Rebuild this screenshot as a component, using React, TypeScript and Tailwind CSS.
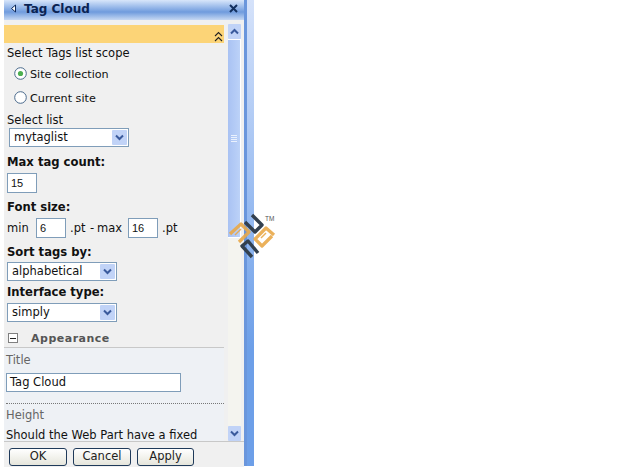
import React from "react";

function Chevron({ dir = "down" }: { dir?: "up" | "down" }) {
  return (
    <svg width="9" height="7" viewBox="0 0 9 7">
      <path d={dir === "down" ? "M1 1.5 L4.5 5 L8 1.5" : "M1 5.5 L4.5 2 L8 5.5"} fill="none" stroke="#3a5a9c" strokeWidth="2" />
    </svg>
  );
}

function Select({ value, width, ml = "" }: { value: string; width: string; ml?: string }) {
  return (
    <div className={`flex h-[19px] items-center justify-between border border-[#7f9db9] bg-white pl-[4px] pr-[1px] ${width} ${ml}`}>
      <span className="text-[11.5px] leading-none text-[#111]">{value}</span>
      <div className="flex h-[15px] w-[15px] items-center justify-center rounded-[1px] bg-[#c1d3f7]">
        <Chevron />
      </div>
    </div>
  );
}

function Input({ value, width }: { value: string; width: string }) {
  return (
    <div className={`flex h-[20px] items-center border border-[#7f9db9] bg-white pl-[3px] ${width} text-[11px] leading-none text-[#111] font-['Liberation_Sans',sans-serif]`}>
      {value}
    </div>
  );
}

function Radio({ checked, label }: { checked?: boolean; label: string }) {
  return (
    <div className="flex h-[24px] items-center pl-[7px]">
      <svg width="13" height="13" viewBox="0 0 13 13">
        <circle cx="6.5" cy="6.5" r="5.8" fill="#fff" stroke="#4a6a8c" />
        {checked && <circle cx="6.5" cy="6.5" r="2.6" fill="#4caf50" />}
      </svg>
      <span className="ml-[3px] pt-[3px] text-[11.2px] leading-[15px] text-[#111]">{label}</span>
    </div>
  );
}

function Heading({ children, className = "" }: { children: React.ReactNode; className?: string }) {
  return <div className={`text-[11.6px] font-bold leading-[14px] text-[#111] ${className}`}>{children}</div>;
}

function Btn({ label, width }: { label: string; width: string }) {
  return (
    <div className={`flex h-[18px] items-center justify-center rounded-[3px] border-[1.5px] border-[#1f3a5a] bg-gradient-to-b from-white to-[#e6e6dc] text-[11.5px] leading-none text-[#222] ${width}`}>
      {label}
    </div>
  );
}

function Logo() {
  return (
    <svg className="absolute left-[228px] top-[210px]" width="50" height="50" viewBox="0 0 50 50">
      <g fill="none" strokeLinejoin="round">
        <g stroke="#e9a94a" strokeWidth="3.2" opacity="0.9">
          <path d="M2 24 L13 14 L21 22 L11 32" />
          <path d="M7 25 L13 19" strokeWidth="1.5" />
          <path d="M46 25 L38 18 L27 29 L34 36 L44 26" />
          <path d="M33 28 L38 23" strokeWidth="1.5" />
        </g>
        <g stroke="#33404f" strokeWidth="3.4">
          <path d="M24 5 L34 15 L27 22 L17 12" />
          <path d="M30 43 L20 31 L14 36 L24 47" />
        </g>
      </g>
      <text x="37" y="11" fontSize="6.5" fill="#555" fontFamily="'Liberation Sans', sans-serif">TM</text>
    </svg>
  );
}

export default function App() {
  return (
    <div className="relative h-[471px] w-[640px] overflow-hidden bg-white font-['DejaVu_Sans',Verdana,sans-serif]">
      <div className="flex h-[467px] w-[254px]">
        <div className="flex w-[244px] flex-col pl-[4px]">
          <div className="flex h-[20px] items-center bg-gradient-to-b from-[#d8e6fa] via-[#6f9bdd] via-60% to-[#c6d8f2] pb-[3px] pl-[6px] pr-[6px]">
            <svg width="7" height="9" viewBox="0 0 7 9" className="shrink-0">
              <path d="M5.5 1 L1.5 4.5 L5.5 8 Z" fill="#fff" stroke="#0d2a5c" />
            </svg>
            <span className="ml-[7px] text-[12px] font-bold text-[#0a2353]">Tag Cloud</span>
            <svg width="9" height="9" viewBox="0 0 9 9" className="ml-auto">
              <path d="M1 1 L8 8 M8 1 L1 8" stroke="#12305f" strokeWidth="2" />
            </svg>
          </div>
          <div className="flex min-h-0 flex-1 flex-col bg-[#f0f0f0]">
            <div className="flex min-h-0 flex-1 pt-[4px]">
              <div className="min-w-0 flex-1 overflow-hidden">
                <div className="mt-[1px] flex h-[18px] items-end justify-end bg-[#fcd477] pb-[1px] pr-[1px]">
                  <svg width="9" height="11" viewBox="0 0 9 11">
                    <path d="M1 5 L4.5 1.5 L8 5 M1 10 L4.5 6.5 L8 10" fill="none" stroke="#222" strokeWidth="1.1" />
                  </svg>
                </div>
                <div className="pl-[3px]">
                  <div className="mt-[3px] text-[11.5px] leading-[15px] text-[#111]">Select Tags list scope</div>
                  <Radio checked label="Site collection" />
                  <Radio label="Current site" />
                  <div className="mt-[4px] text-[11.5px] leading-[15px] text-[#111]">Select list</div>
                  <Select value="mytaglist" width="w-[120px]" ml="ml-[2px]" />
                  <Heading className="mt-[8px]">Max tag count:</Heading>
                  <div className="mt-[4px]"><Input value="15" width="w-[30px]" /></div>
                  <Heading className="mt-[7px]">Font size:</Heading>
                  <div className="mt-[4px] flex items-center text-[11.5px] text-[#111]">
                    <span className="w-[29px] pt-[2px]">min</span>
                    <Input value="6" width="w-[30px]" />
                    <span className="ml-[4px] w-[20px] pt-[2px]">.pt</span>
                    <span className="w-[7px] pt-[2px]">-</span>
                    <span className="w-[31px] pt-[2px]">max</span>
                    <Input value="16" width="w-[30px]" />
                    <span className="ml-[4px] pt-[2px]">.pt</span>
                  </div>
                  <Heading className="mt-[7px]">Sort tags by:</Heading>
                  <div className="mt-[3px]"><Select value="alphabetical" width="w-[110px]" /></div>
                  <Heading className="mt-[4px]">Interface type:</Heading>
                  <div className="mt-[4px]"><Select value="simply" width="w-[110px]" /></div>
                </div>
                <div className="mt-[7px] flex h-[19px] items-center border-b border-[#c8c8c8] pl-[4px]">
                  <div className="flex h-[10px] w-[10px] items-center justify-center border border-[#808080] bg-white">
                    <div className="h-[1px] w-[6px] bg-[#222]" />
                  </div>
                  <span className="ml-[13px] pt-[3px] text-[11px] font-bold tracking-[0.5px] text-[#555]">Appearance</span>
                </div>
                <div className="bg-[#eef1f5] pl-[2px]">
                  <div className="pt-[5px] text-[11.5px] leading-[15px] text-[#666]">Title</div>
                  <div className="mt-[5px] flex h-[19px] w-[175px] items-center border border-[#7f9db9] bg-white pl-[3px] text-[11.5px] leading-none text-[#111]">Tag Cloud</div>
                  <div className="mt-[11px] border-t border-dotted border-[#777]" />
                  <div className="mt-[4px] text-[11.5px] leading-[15px] text-[#666]">Height</div>
                  <div className="mt-[5px] whitespace-nowrap text-[11.5px] leading-[15px] text-[#111]">Should the Web Part have a fixed</div>
                </div>
              </div>
              <div className="ml-[4px] mr-[3px] flex w-[13px] flex-col">
                <div className="flex h-[15px] items-center justify-center rounded-[1px] bg-[#c1d3f7]"><Chevron dir="up" /></div>
                <div className="flex h-[199px] flex-col items-center justify-center gap-[1px] border-t border-r border-b border-white bg-gradient-to-r from-[#a9c2f3] to-[#bcd2f8]">
                  <div className="h-[1px] w-[6px] bg-[#eaf1fd]" />
                  <div className="h-[1px] w-[6px] bg-[#eaf1fd]" />
                  <div className="h-[1px] w-[6px] bg-[#eaf1fd]" />
                  <div className="h-[1px] w-[6px] bg-[#eaf1fd]" />
                </div>
                <div className="flex-1 bg-[#f4f4ef]" />
                <div className="flex h-[15px] items-center justify-center rounded-[1px] bg-[#c1d3f7]"><Chevron /></div>
              </div>
            </div>
            <div className="flex h-[26px] items-start gap-[6px] border-t border-[#c8c8c8] pl-[5px] pt-[6px]">
              <Btn label="OK" width="w-[58px]" />
              <Btn label="Cancel" width="w-[58px]" />
              <Btn label="Apply" width="w-[57px]" />
            </div>
          </div>
        </div>
        <div className="h-[466px] w-[3px] bg-[#6a96dc]" />
        <div className="h-[466px] flex-1 bg-gradient-to-b from-[#d5e2fa] to-[#6d9fe8] to-75%" />
      </div>
      <Logo />
    </div>
  );
}
